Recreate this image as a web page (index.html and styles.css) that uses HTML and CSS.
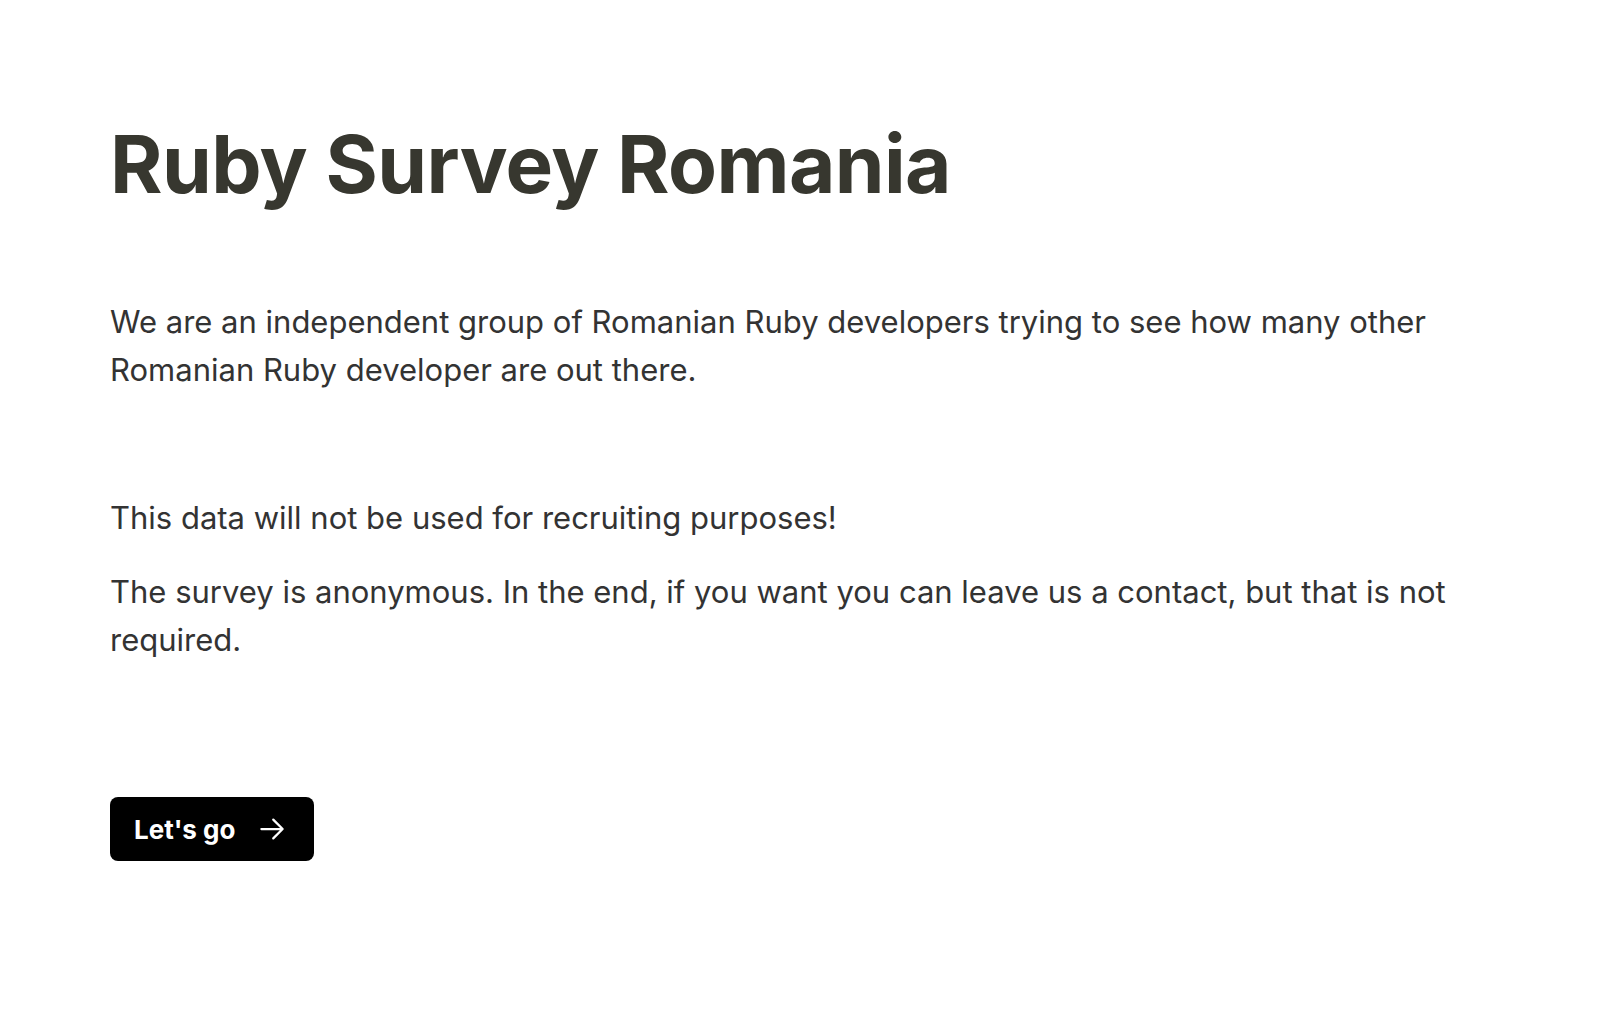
FILE: index.html
```html
<!DOCTYPE html>
<html lang="en">
<head>
<meta charset="utf-8">
<title>Ruby Survey Romania</title>
<link rel="stylesheet" href="styles.css">
</head>
<body>
<main class="page">
  <h1 class="title">Ruby Survey Romania</h1>
  <p class="lead">We are an independent group of Romanian Ruby developers trying to see how many other Romanian Ruby developer are out there.</p>
  <p class="note">This data will not be used for recruiting purposes!</p>
  <p class="note2">The survey is anonymous. In the end, if you want you can leave us a contact, but that is not required.</p>
  <button class="go" type="button">
    <span class="go-label">Let's go</span>
    <svg class="go-arrow" width="30" height="30" viewBox="0 0 24 24" fill="none" stroke="#fff" stroke-width="1.8" stroke-linecap="round" stroke-linejoin="round"><path d="M3.5 12h17M13 4.5l7.5 7.5-7.5 7.5"/></svg>
  </button>
</main>
</body>
</html>
```

FILE: styles.css
```css
html, body {
  margin: 0;
  padding: 0;
  background: #ffffff;
}
.page {
  padding: 116px 110px 0 110px;
  font-family: "Inter", "Liberation Sans", sans-serif;
  color: #333333;
}
.title {
  margin: 0;
  font-size: 80px;
  line-height: 1.2;
  font-weight: 700;
  color: #37372f;
  letter-spacing: -0.6px;
}
.lead, .note, .note2 {
  margin: 0;
  font-size: 31px;
  line-height: 48px;
  font-weight: 400;
  max-width: 1360px;
}
.lead {
  margin-top: 86px;
}
.note {
  margin-top: 100px;
}
.note2 {
  margin-top: 26px;
}
.go {
  margin-top: 133px;
  display: flex;
  align-items: center;
  gap: 22px;
  height: 64px;
  padding: 0 27px 0 24px;
  background: #000000;
  color: #ffffff;
  border: none;
  border-radius: 8px;
  font-family: "Inter", "Liberation Sans", sans-serif;
  font-size: 26px;
  font-weight: 700;
  cursor: pointer;
}
.go-arrow {
  display: block;
}
```
